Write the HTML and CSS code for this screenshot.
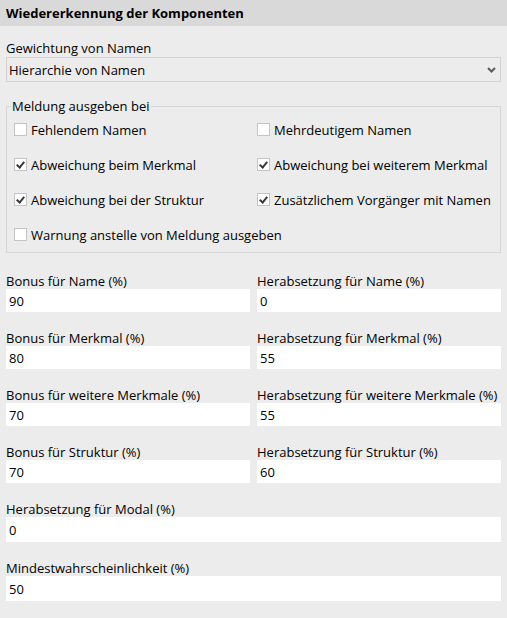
FILE: index.html
```html
<!DOCTYPE html>
<html lang="de">
<head>
<meta charset="UTF-8">
<meta name="viewport" content="width=device-width, initial-scale=1.0">
<title>Wiedererkennung der Komponenten</title>

<link rel="stylesheet" href="styles.css">
</head>

<body>

<div class="panel">

<div class="panel-title">Wiedererkennung der Komponenten</div>

<div class="panel-body">

<!-- Gewichtung -->
<label class="field">
<span class="field-label">Gewichtung von Namen</span>
<span class="select-wrap">
<select>
<option>Hierarchie von Namen</option>
<option>Gleichgewichtet</option>
</select>
<svg class="chevron" width="9" height="6" viewBox="0 0 9 6"><path d="M1 1 L4.5 4.5 L8 1" fill="none" stroke="#5a5a5a" stroke-width="2"/></svg>
</span>
</label>

<!-- Meldungen -->
<fieldset class="group">
<legend>Meldung ausgeben bei</legend>
<div class="check-grid">
<label class="check"><input type="checkbox"> Fehlendem Namen</label>
<label class="check"><input type="checkbox"> Mehrdeutigem Namen</label>
<label class="check"><input type="checkbox" checked> Abweichung beim Merkmal</label>
<label class="check"><input type="checkbox" checked> Abweichung bei weiterem Merkmal</label>
<label class="check"><input type="checkbox" checked> Abweichung bei der Struktur</label>
<label class="check"><input type="checkbox" checked> Zusätzlichem Vorgänger mit Namen</label>
<label class="check wide"><input type="checkbox"> Warnung anstelle von Meldung ausgeben</label>
</div>
</fieldset>

<!-- Werte -->
<div class="field-grid">
<label class="field">
<span class="field-label">Bonus für Name (%)</span>
<input type="text" value="90">
</label>
<label class="field">
<span class="field-label">Herabsetzung für Name (%)</span>
<input type="text" value="0">
</label>
<label class="field">
<span class="field-label">Bonus für Merkmal (%)</span>
<input type="text" value="80">
</label>
<label class="field">
<span class="field-label">Herabsetzung für Merkmal (%)</span>
<input type="text" value="55">
</label>
<label class="field">
<span class="field-label">Bonus für weitere Merkmale (%)</span>
<input type="text" value="70">
</label>
<label class="field">
<span class="field-label">Herabsetzung für weitere Merkmale (%)</span>
<input type="text" value="55">
</label>
<label class="field">
<span class="field-label">Bonus für Struktur (%)</span>
<input type="text" value="70">
</label>
<label class="field">
<span class="field-label">Herabsetzung für Struktur (%)</span>
<input type="text" value="60">
</label>
</div>

<label class="field full">
<span class="field-label">Herabsetzung für Modal (%)</span>
<input type="text" value="0">
</label>
<label class="field full">
<span class="field-label">Mindestwahrscheinlichkeit (%)</span>
<input type="text" value="50">
</label>

</div>
</div>

</body>
</html>
```

FILE: styles.css
```css
body{
    margin:0;
    background:#ececec;
    font-family:"Open Sans", sans-serif;
    font-size:13px;
    color:#000;
}

.panel-title{
    height:26px;
    line-height:26px;
    padding-left:6px;
    background:#d9d9d9;
    font-weight:bold;
}

.panel-body{
    padding:14px 6px 0;
}

.field{
    display:block;
    margin-bottom:18px;
}

.field-label{
    display:block;
    line-height:16px;
}

.field input{
    display:block;
    box-sizing:border-box;
    width:100%;
    height:23px;
    border:none;
    padding:0 3px;
    background:#fff;
    font:inherit;
    color:#000;
    outline:none;
}

.field.full input{
    height:25px;
}

.select-wrap{
    position:relative;
    display:block;
    margin-top:1px;
}

.select-wrap select{
    display:block;
    box-sizing:border-box;
    width:100%;
    height:25px;
    appearance:none;
    border:1px solid #d2d2d2;
    border-radius:0;
    background:#ececec;
    padding:0 2px;
    font:inherit;
    color:#000;
    outline:none;
}

.chevron{
    position:absolute;
    right:5px;
    top:10px;
    pointer-events:none;
}

.group{
    margin:17px 0 0;
    padding:0 8px 0 4px;
    border:1px solid #d6d6d6;
}

.group legend{
    padding:0 1px;
    line-height:12px;
}

.check-grid{
    display:grid;
    grid-template-columns:243px 1fr;
    grid-auto-rows:35px;
    margin-left:3px;
}

.check{
    display:flex;
    align-items:center;
    gap:4px;
    white-space:nowrap;
}

.check.wide{
    grid-column:1 / 3;
}

.check input{
    appearance:none;
    box-sizing:border-box;
    width:13px;
    height:13px;
    margin:0;
    border:1px solid #c4c4c4;
    background:#fff;
    position:relative;
}

.check input:checked::after{
    content:"";
    position:absolute;
    left:3px;
    top:1px;
    width:3px;
    height:6px;
    border:solid #3a3a3a;
    border-width:0 2px 2px 0;
    transform:rotate(40deg);
}

.field-grid{
    display:grid;
    grid-template-columns:1fr 1fr;
    column-gap:7px;
    margin-top:20px;
}
```
